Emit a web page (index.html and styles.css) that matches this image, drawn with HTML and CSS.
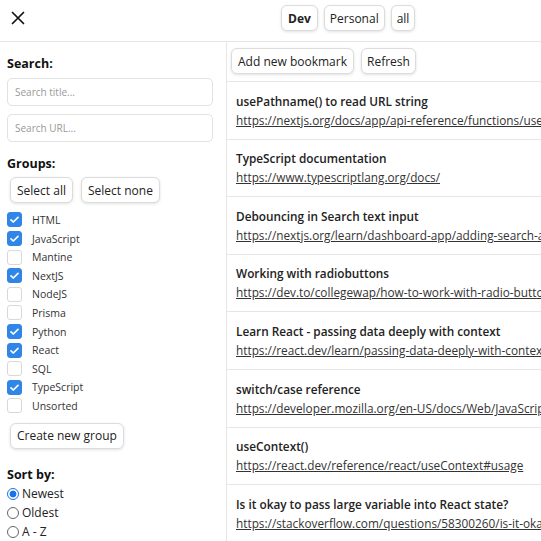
FILE: index.html
```html
<!DOCTYPE html>
<html lang="en">
<head>
<meta charset="utf-8">
<link rel="stylesheet" href="styles.css">
</head>
<body>
<header class="topbar">
  <button class="close" aria-label="Close">
    <svg width="14" height="14" viewBox="0 0 14 14"><path d="M1.5 1.5 L12.5 12.5 M12.5 1.5 L1.5 12.5" stroke="#111" stroke-width="1.7" stroke-linecap="round"/></svg>
  </button>
  <nav class="tabs">
    <button class="btn tab active">Dev</button>
    <button class="btn tab">Personal</button>
    <button class="btn tab">all</button>
  </nav>
</header>
<main class="layout">
  <aside class="sidebar">
    <h3 class="label">Search:</h3>
    <input class="field" placeholder="Search title...">
    <input class="field" placeholder="Search URL...">
    <h3 class="label groups-label">Groups:</h3>
    <div class="btn-row">
      <button class="btn">Select all</button>
      <button class="btn">Select none</button>
    </div>
    <ul class="checks">
      <li><span class="box on"></span>HTML</li>
      <li><span class="box on"></span>JavaScript</li>
      <li><span class="box"></span>Mantine</li>
      <li><span class="box on"></span>NextJS</li>
      <li><span class="box"></span>NodeJS</li>
      <li><span class="box"></span>Prisma</li>
      <li><span class="box on"></span>Python</li>
      <li><span class="box on"></span>React</li>
      <li><span class="box"></span>SQL</li>
      <li><span class="box on"></span>TypeScript</li>
      <li><span class="box"></span>Unsorted</li>
    </ul>
    <button class="btn create">Create new group</button>
    <h3 class="label sort-label">Sort by:</h3>
    <div class="radios">
      <label><span class="radio on"></span>Newest</label>
      <label><span class="radio"></span>Oldest</label>
      <label><span class="radio"></span>A - Z</label>
    </div>
  </aside>
  <section class="content">
    <div class="toolbar">
      <button class="btn">Add new bookmark</button>
      <button class="btn">Refresh</button>
    </div>
    <ul class="items">
      <li><div class="title">usePathname() to read URL string</div><a class="url" href="#">https://nextjs.org/docs/app/api-reference/functions/use-pathname</a></li>
      <li><div class="title">TypeScript documentation</div><a class="url" href="#">https://www.typescriptlang.org/docs/</a></li>
      <li><div class="title">Debouncing in Search text input</div><a class="url" href="#">https://nextjs.org/learn/dashboard-app/adding-search-and-pagination</a></li>
      <li><div class="title">Working with radiobuttons</div><a class="url" href="#">https://dev.to/collegewap/how-to-work-with-radio-buttons-in-react</a></li>
      <li><div class="title">Learn React - passing data deeply with context</div><a class="url" href="#">https://react.dev/learn/passing-data-deeply-with-context</a></li>
      <li><div class="title">switch/case reference</div><a class="url" href="#">https://developer.mozilla.org/en-US/docs/Web/JavaScript/Reference/Statements/switch</a></li>
      <li><div class="title">useContext()</div><a class="url" href="#">https://react.dev/reference/react/useContext#usage</a></li>
      <li><div class="title">Is it okay to pass large variable into React state?</div><a class="url" href="#">https://stackoverflow.com/questions/58300260/is-it-okay-to-pass-large-variable</a></li>
    </ul>
  </section>
</main>
</body>
</html>
```
FILE: styles.css
```css
* { box-sizing: border-box; }
html, body { margin: 0; padding: 0; }
body {
  font-family: "Open Sans", "Noto Sans", sans-serif;
  color: #222;
  background: #fff;
  width: 541px;
  height: 541px;
  overflow: hidden;
}
button { font-family: inherit; }

.btn {
  background: #fff;
  border: 1px solid #dcdcdc;
  border-radius: 6px;
  box-shadow: 0 1px 3px rgba(0,0,0,0.12);
  height: 26px;
  padding: 0 6px;
  font-size: 12px;
  color: #222;
  cursor: pointer;
  white-space: nowrap;
  flex: none;
}

.topbar {
  height: 42px;
  border-bottom: 1px solid #e6e6e6;
  display: flex;
  align-items: center;
}
.close {
  background: none;
  border: 0;
  padding: 0;
  margin-left: 11px;
  width: 14px;
  height: 14px;
  display: flex;
  margin-top: -5px;
}
.tabs {
  display: flex;
  gap: 6px;
  margin-left: 256px;
  margin-top: -5px;
}
.tab { height: 26px; padding: 0 5px; }
.tab.active { font-weight: 700; padding: 0 6px; }
.tab:last-child { padding: 0 5px; }

.layout {
  display: flex;
  height: 499px;
}
.sidebar {
  width: 227px;
  flex: none;
  border-right: 1px solid #e6e6e6;
  padding: 14px 13px 0 7px;
  display: flex;
  flex-direction: column;
  align-items: flex-start;
  overflow: hidden;
}
.sidebar > * { flex: none; }
.label {
  margin: 0;
  font-size: 12.5px;
  font-weight: 700;
  line-height: 16px;
  color: #111;
}
.field {
  display: block;
  width: 206px;
  height: 28px;
  border: 1px solid #e2e2e2;
  border-radius: 5px;
  padding: 0 7px;
  font-family: inherit;
  font-size: 10px;
  color: #333;
  margin: 6px 0 0;
}
.field::placeholder { color: #999; }
.field + .field { margin-top: 8px; }
.groups-label { margin-top: 14px; }
.btn-row {
  display: flex;
  gap: 8px;
  margin-top: 5px;
  margin-left: 3px;
}
.checks {
  list-style: none;
  margin: 7.7px 0 0;
  padding: 0;
}
.checks li {
  display: flex;
  align-items: center;
  height: 18.6px;
  font-size: 10.5px;
  color: #333;
}
.box {
  width: 15px;
  height: 15px;
  border: 1px solid #d8d8d8;
  border-radius: 3px;
  margin-right: 10px;
  background: #fff;
  flex: none;
}
.box.on {
  background: #2f86e6 url("data:image/svg+xml;utf8,<svg xmlns='http://www.w3.org/2000/svg' width='15' height='15' viewBox='0 0 15 15'><path d='M4 7.8 L6.3 10 L11 5.3' fill='none' stroke='white' stroke-width='1.7' stroke-linecap='round' stroke-linejoin='round'/></svg>") center/15px no-repeat;
  border-color: #2f86e6;
}
.create {
  margin-top: 7.7px;
  margin-left: 3px;
}
.sort-label { margin-top: 18px; }
.radios {
  display: flex;
  flex-direction: column;
  margin-top: 1.5px;
}
.radios label {
  display: flex;
  align-items: center;
  height: 19px;
  font-size: 12px;
  color: #222;
}
.radio {
  width: 12px;
  height: 12px;
  border: 1px solid #666;
  border-radius: 50%;
  margin-right: 3px;
  margin-left: 0;
}
.radio.on {
  border-color: #1a73e8;
  background: radial-gradient(circle, #1a73e8 0 3.2px, #fff 3.7px);
}

.content {
  flex: 1;
  min-width: 0;
  overflow: hidden;
}
.toolbar {
  display: flex;
  gap: 7px;
  padding: 6px 4px;
  border-bottom: 1px solid #e6e6e6;
  height: 40px;
}
.toolbar .btn { padding: 0 6px; }
.toolbar .btn + .btn { padding: 0 5px; }
.items {
  list-style: none;
  margin: 0;
  padding: 0;
}
.items li {
  border-bottom: 1px solid #e6e6e6;
  padding: 9.6px 0 9px 9px;
  white-space: nowrap;
}
.title {
  font-size: 11.8px;
  font-weight: 600;
  line-height: 19px;
  color: #222;
}
.url {
  display: block;
  font-size: 11.8px;
  line-height: 19px;
  color: #333;
  text-decoration: underline;
}
```
